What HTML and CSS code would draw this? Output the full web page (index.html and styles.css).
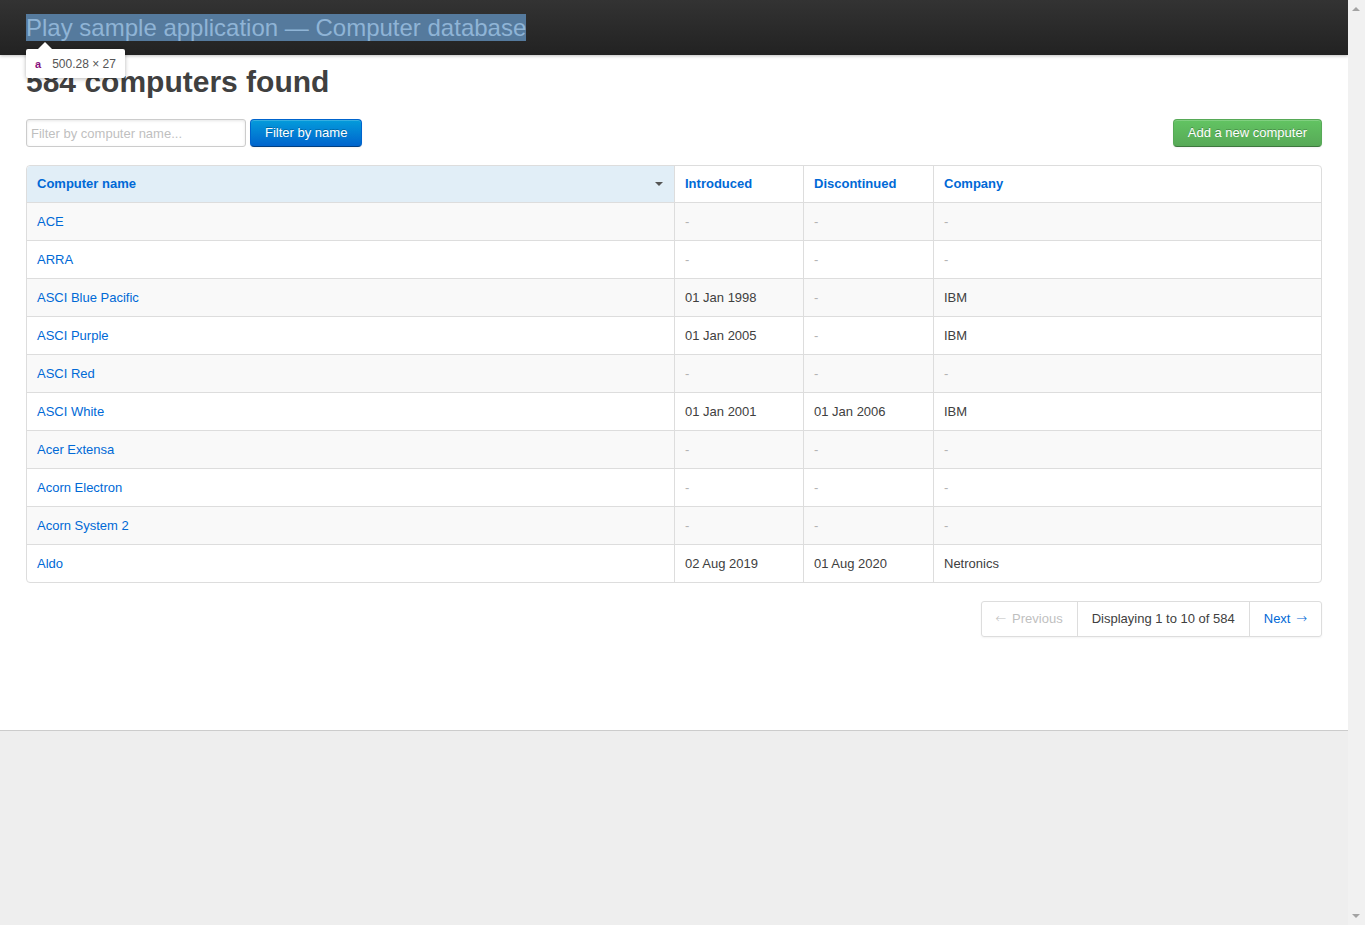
FILE: index.html
```html
<!DOCTYPE html>
<html lang="en">
<head>
<meta charset="utf-8">
<title>Computers database</title>
<link rel="stylesheet" href="styles.css">
</head>
<body>
<div class="page">
  <header class="topbar">
    <h1 class="brand"><a class="brand-link" href="#">Play sample application — Computer database</a></h1>
    <div class="inspect-tip"><span class="tip-tag">a</span><span class="tip-size">500.28 × 27</span></div>
  </header>

  <section class="main">
    <h1 class="count">584 computers found</h1>

    <div class="actions">
      <form class="filter">
        <input class="search" type="search" placeholder="Filter by computer name...">
        <button class="btn btn-primary" type="button">Filter by name</button>
      </form>
      <a class="btn btn-success" href="#">Add a new computer</a>
    </div>

    <table class="computers">
      <thead>
        <tr>
          <th class="col-name sorted"><a href="#">Computer name</a><span class="caret"></span></th>
          <th class="col-date"><a href="#">Introduced</a></th>
          <th class="col-date2"><a href="#">Discontinued</a></th>
          <th class="col-company"><a href="#">Company</a></th>
        </tr>
      </thead>
      <tbody>
        <tr><td><a href="#">ACE</a></td><td><em>-</em></td><td><em>-</em></td><td><em>-</em></td></tr>
        <tr><td><a href="#">ARRA</a></td><td><em>-</em></td><td><em>-</em></td><td><em>-</em></td></tr>
        <tr><td><a href="#">ASCI Blue Pacific</a></td><td>01 Jan 1998</td><td><em>-</em></td><td>IBM</td></tr>
        <tr><td><a href="#">ASCI Purple</a></td><td>01 Jan 2005</td><td><em>-</em></td><td>IBM</td></tr>
        <tr><td><a href="#">ASCI Red</a></td><td><em>-</em></td><td><em>-</em></td><td><em>-</em></td></tr>
        <tr><td><a href="#">ASCI White</a></td><td>01 Jan 2001</td><td>01 Jan 2006</td><td>IBM</td></tr>
        <tr><td><a href="#">Acer Extensa</a></td><td><em>-</em></td><td><em>-</em></td><td><em>-</em></td></tr>
        <tr><td><a href="#">Acorn Electron</a></td><td><em>-</em></td><td><em>-</em></td><td><em>-</em></td></tr>
        <tr><td><a href="#">Acorn System 2</a></td><td><em>-</em></td><td><em>-</em></td><td><em>-</em></td></tr>
        <tr><td><a href="#">Aldo</a></td><td>02 Aug 2019</td><td>01 Aug 2020</td><td>Netronics</td></tr>
      </tbody>
    </table>

    <div class="pager-wrap">
      <ul class="pagination">
        <li class="prev disabled"><a href="#"><span class="arrow arrow-l">←</span> Previous</a></li>
        <li class="current"><a href="#">Displaying 1 to 10 of 584</a></li>
        <li class="next"><a href="#">Next <span class="arrow arrow-r">→</span></a></li>
      </ul>
    </div>
  </section>
</div>

<div class="scrollbar" aria-hidden="true">
  <span class="sb-up"></span>
  <span class="sb-down"></span>
</div>
</body>
</html>
```

FILE: styles.css
```css
html {
  background: #eeeeee;
}

body {
  margin: 0 17px 0 0;
  background: #eeeeee;
  font-family: "Liberation Sans", Arial, Helvetica, sans-serif;
  font-size: 13px;
  line-height: 18px;
  color: #404040;
}

a {
  color: #0069d6;
  text-decoration: none;
}

.page {
  background: #ffffff;
  min-height: 730px;
  border-bottom: 1px solid #cccccc;
}

.topbar {
  position: relative;
  height: 55px;
  background: linear-gradient(#333333, #222222);
  box-shadow: 0 1px 3px rgba(0, 0, 0, 0.25);
  padding: 0 26px;
  box-sizing: border-box;
}

.brand {
  margin: 0;
  padding-top: 14px;
  font-size: 24px;
  font-weight: normal;
  line-height: 27px;
}

.brand-link {
  display: inline-block;
  color: #8fb4d6;
  background: #557a9d;
  height: 27px;
}

.inspect-tip {
  position: absolute;
  left: 26px;
  top: 49px;
  height: 29px;
  padding: 0 9px;
  display: flex;
  align-items: center;
  gap: 11px;
  background: #ffffff;
  border-radius: 2px;
  box-shadow: 0 1px 4px rgba(0, 0, 0, 0.3);
  font-family: "Liberation Sans", Arial, sans-serif;
  font-size: 12px;
  z-index: 5;
}

.inspect-tip::before {
  content: "";
  position: absolute;
  left: 12px;
  top: -7px;
  border-left: 7px solid transparent;
  border-right: 7px solid transparent;
  border-bottom: 7px solid #ffffff;
}

.tip-tag {
  color: #881280;
  font-weight: bold;
  font-size: 11px;
}

.tip-size {
  color: #555555;
}

.main {
  padding: 0 26px;
}

.count {
  margin: 0;
  padding-top: 9px;
  font-size: 30px;
  line-height: 36px;
  font-weight: bold;
  color: #404040;
}

.actions {
  display: flex;
  justify-content: space-between;
  align-items: center;
  margin-top: 19px;
}

.filter {
  display: flex;
  gap: 4px;
  margin: 0;
}

.search {
  width: 220px;
  height: 28px;
  box-sizing: border-box;
  padding: 4px;
  border: 1px solid #cccccc;
  border-radius: 3px;
  font-family: inherit;
  font-size: 13px;
  color: #808080;
  box-shadow: inset 0 1px 3px rgba(0, 0, 0, 0.1);
  outline: none;
}

.search::placeholder {
  color: #bfbfbf;
}

.btn {
  display: inline-block;
  box-sizing: border-box;
  height: 28px;
  padding: 0 14px;
  line-height: 26px;
  font-family: inherit;
  font-size: 13px;
  color: #ffffff;
  border-radius: 4px;
  text-shadow: 0 -1px 0 rgba(0, 0, 0, 0.25);
  box-shadow: inset 0 1px 0 rgba(255, 255, 255, 0.2), 0 1px 2px rgba(0, 0, 0, 0.05);
  cursor: pointer;
}

.btn-primary {
  background: linear-gradient(#049cdb, #0064cd);
  border: 1px solid #0064cd;
  border-bottom-color: #003f81;
}

.btn-success {
  background: linear-gradient(#62c462, #57a957);
  border: 1px solid #57a957;
  border-bottom-color: #3d773d;
}

.computers {
  width: 100%;
  margin-top: 18px;
  border-collapse: separate;
  border-spacing: 0;
  border: 1px solid #dddddd;
  border-radius: 4px;
  table-layout: fixed;
}

.computers th,
.computers td {
  padding: 10px 10px 9px;
  line-height: 18px;
  text-align: left;
  vertical-align: top;
  border-left: 1px solid #dddddd;
}

.computers td {
  border-top: 1px solid #dddddd;
}

.computers th:first-child,
.computers td:first-child {
  border-left: 0;
}

.computers th {
  font-weight: bold;
  padding-top: 9px;
  padding-bottom: 9px;
}

.computers th.sorted {
  background: #e1eef7;
  border-top-left-radius: 4px;
}

.col-name { width: 627px; }
.col-date { width: 108px; }
.col-date2 { width: 109px; }

.caret {
  float: right;
  margin-top: 7px;
  margin-right: 1px;
  border-left: 4px solid transparent;
  border-right: 4px solid transparent;
  border-top: 4px solid #555555;
}

.computers tbody tr:nth-child(odd) td {
  background: #f9f9f9;
}

.computers em {
  font-style: normal;
  color: #b3b3b3;
}

.pager-wrap {
  display: flex;
  justify-content: flex-end;
  margin-top: 18px;
}

.pagination {
  display: flex;
  margin: 0;
  padding: 0;
  list-style: none;
  border: 1px solid #dddddd;
  border-radius: 3px;
  box-shadow: 0 1px 2px rgba(0, 0, 0, 0.05);
}

.pagination li a {
  display: block;
  height: 34px;
  padding: 0 14px;
  line-height: 34px;
  border-right: 1px solid #dddddd;
}

.pagination li:last-child a {
  border-right: 0;
}

.pagination .arrow {
  font-family: "DejaVu Sans", sans-serif;
  font-size: 13px;
  line-height: 1;
  font-weight: 300;
}

.pagination .arrow-l {
  margin-right: 2px;
}

.pagination .arrow-r {
  margin-left: 2px;
}

.pagination .disabled a {
  color: #bfbfbf;
}

.pagination .current a {
  color: #404040;
}

.scrollbar {
  position: fixed;
  top: 0;
  right: 0;
  width: 17px;
  height: 100%;
  background: #f1f1f1;
}

.sb-up,
.sb-down {
  position: absolute;
  left: 4px;
  width: 0;
  height: 0;
  border-left: 4px solid transparent;
  border-right: 4px solid transparent;
}

.sb-up {
  top: 7px;
  border-bottom: 4px solid #a3a3a3;
}

.sb-down {
  bottom: 7px;
  border-top: 4px solid #a3a3a3;
}
```
